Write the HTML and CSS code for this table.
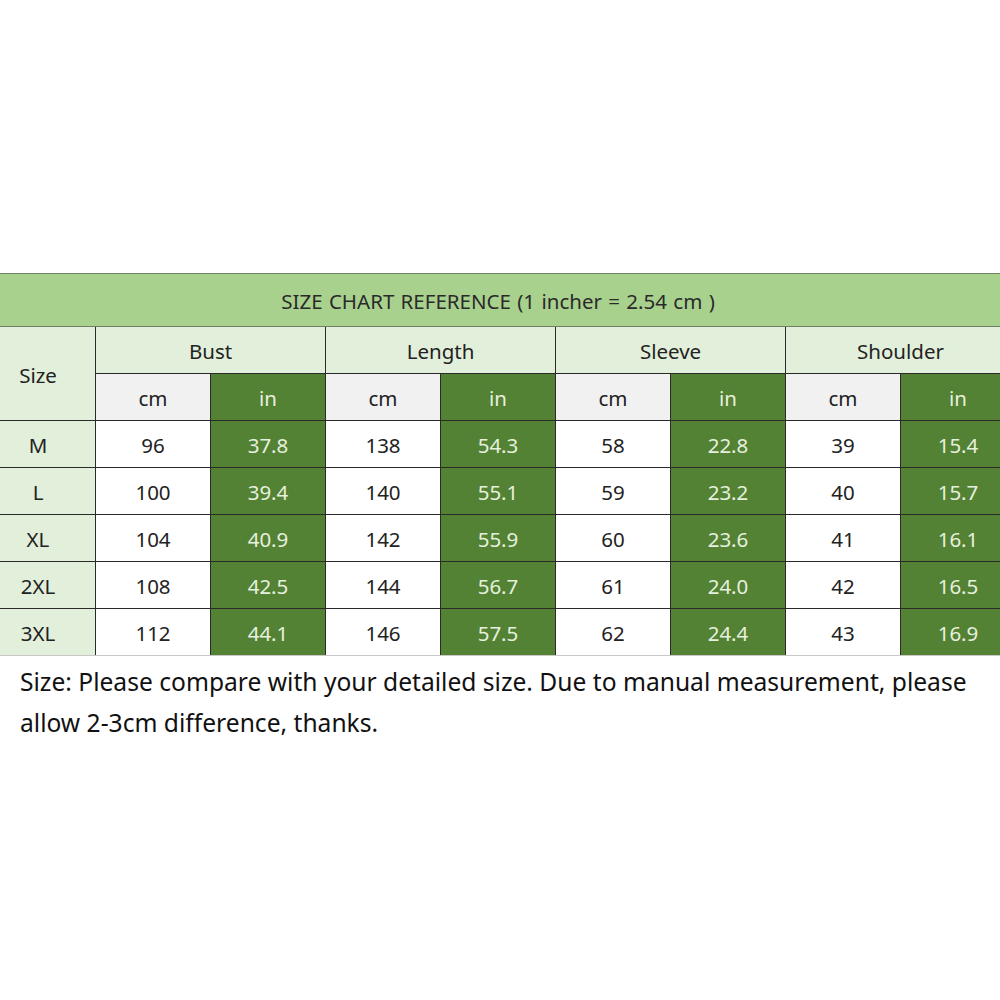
FILE: index.html
```html
<!DOCTYPE html>
<html>
<head>
<meta charset="utf-8">
<link rel="stylesheet" href="styles.css">
</head>
<body>
<div class="page">
  <table class="chart">
    <colgroup>
      <col class="c-size">
      <col class="c-val"><col class="c-val"><col class="c-val"><col class="c-val">
      <col class="c-val"><col class="c-val"><col class="c-val"><col class="c-val">
    </colgroup>
    <tr class="r-title"><td colspan="9" class="title">SIZE CHART REFERENCE (1 incher = 2.54 cm )</td></tr>
    <tr class="r-head">
      <td rowspan="2" class="size-col">Size</td>
      <td colspan="2" class="head">Bust</td>
      <td colspan="2" class="head">Length</td>
      <td colspan="2" class="head">Sleeve</td>
      <td colspan="2" class="head">Shoulder</td>
    </tr>
    <tr class="r-unit">
      <td class="unit-cm">cm</td><td class="dark">in</td>
      <td class="unit-cm">cm</td><td class="dark">in</td>
      <td class="unit-cm">cm</td><td class="dark">in</td>
      <td class="unit-cm">cm</td><td class="dark">in</td>
    </tr>
    <tr><td class="size-col">M</td><td>96</td><td class="dark">37.8</td><td>138</td><td class="dark">54.3</td><td>58</td><td class="dark">22.8</td><td>39</td><td class="dark">15.4</td></tr>
    <tr><td class="size-col">L</td><td>100</td><td class="dark">39.4</td><td>140</td><td class="dark">55.1</td><td>59</td><td class="dark">23.2</td><td>40</td><td class="dark">15.7</td></tr>
    <tr><td class="size-col">XL</td><td>104</td><td class="dark">40.9</td><td>142</td><td class="dark">55.9</td><td>60</td><td class="dark">23.6</td><td>41</td><td class="dark">16.1</td></tr>
    <tr><td class="size-col">2XL</td><td>108</td><td class="dark">42.5</td><td>144</td><td class="dark">56.7</td><td>61</td><td class="dark">24.0</td><td>42</td><td class="dark">16.5</td></tr>
    <tr class="r-last"><td class="size-col">3XL</td><td>112</td><td class="dark">44.1</td><td>146</td><td class="dark">57.5</td><td>62</td><td class="dark">24.4</td><td>43</td><td class="dark">16.9</td></tr>
  </table>
  <p class="note">Size: Please compare with your detailed size. Due to manual measurement, please allow 2-3cm difference, thanks.</p>
</div>
</body>
</html>
```

FILE: styles.css
```css
html, body {
  margin: 0;
  padding: 0;
  background: #ffffff;
  overflow: hidden;
}
.page {
  width: 1000px;
  height: 1000px;
  overflow: hidden;
  padding-top: 273px;
  box-sizing: border-box;
}
.chart {
  margin-left: -20px;
  width: 1036px;
  border-collapse: collapse;
  table-layout: fixed;
  font-family: "Noto Sans", "Liberation Sans", sans-serif;
  font-size: 20.5px;
  color: #222222;
}
.c-size { width: 115px; }
.c-val { width: 115px; }
.chart td {
  border: 1px solid #2a2a2a;
  text-align: center;
  vertical-align: middle;
  padding: 2px 0 0 0;
  height: 44px;
  background: #ffffff;
}
.r-title td.title {
  height: 50px;
  background: #a9d18e;
  border-top: 1px solid #6f7f66;
  border-bottom: 1px solid #6f7f66;
  color: #2a2a2a;
  word-spacing: 1px;
}
.chart td.size-col {
  background: #e2efda;
}
.chart td.head {
  background: #e2efda;
}
.chart td.unit-cm {
  background: #f1f1f1;
}
.chart td.dark {
  background: #548235;
  color: #e6f0de;
}
.r-last td {
  border-bottom: 1px solid #c8c8c8;
}
.note {
  margin: 5px 0 0 20px;
  width: 960px;
  font-family: "Noto Sans", sans-serif;
  font-size: 24.6px;
  line-height: 41px;
  color: #111111;
}
```
